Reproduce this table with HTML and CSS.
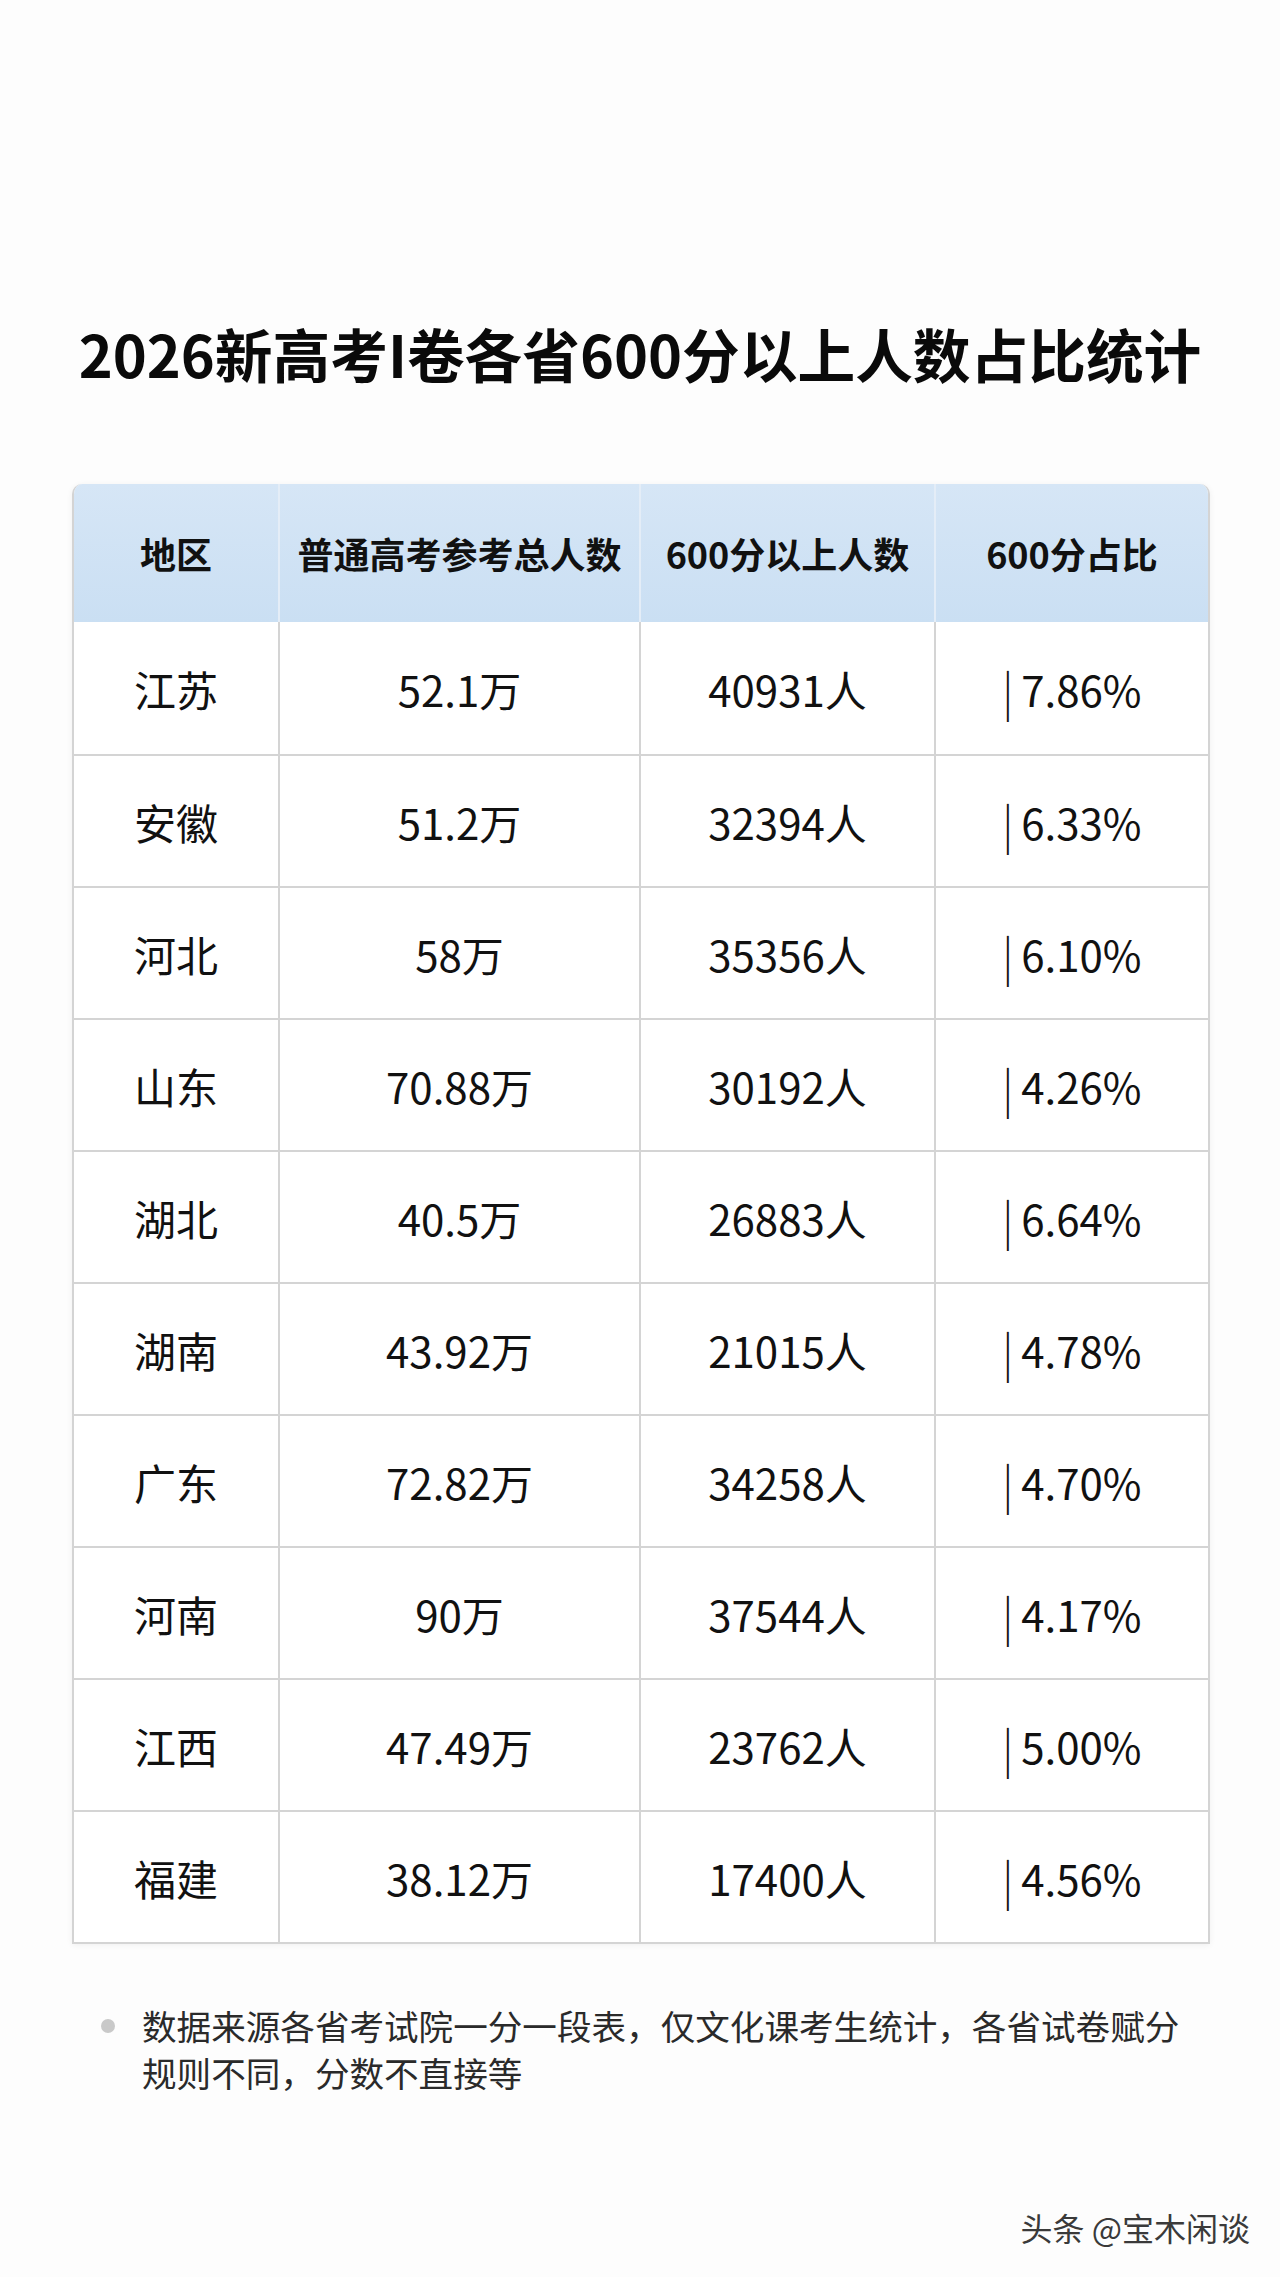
FILE: index.html
```html
<!DOCTYPE html>
<html lang="zh-CN">
<head>
<meta charset="utf-8">
<title>2026新高考I卷各省600分以上人数占比统计</title>
<link rel="stylesheet" href="styles.css">
</head>
<body>
<div class="page">
  <h1 class="title">2026新高考I卷各省600分以上人数占比统计</h1>
  <table class="stats">
    <thead>
      <tr><th>地区</th><th>普通高考参考总人数</th><th>600分以上人数</th><th>600分占比</th></tr>
    </thead>
    <tbody>
      <tr><td>江苏</td><td>52.1万</td><td>40931人</td><td><span class="bar">|</span>7.86%</td></tr>
      <tr><td>安徽</td><td>51.2万</td><td>32394人</td><td><span class="bar">|</span>6.33%</td></tr>
      <tr><td>河北</td><td>58万</td><td>35356人</td><td><span class="bar">|</span>6.10%</td></tr>
      <tr><td>山东</td><td>70.88万</td><td>30192人</td><td><span class="bar">|</span>4.26%</td></tr>
      <tr><td>湖北</td><td>40.5万</td><td>26883人</td><td><span class="bar">|</span>6.64%</td></tr>
      <tr><td>湖南</td><td>43.92万</td><td>21015人</td><td><span class="bar">|</span>4.78%</td></tr>
      <tr><td>广东</td><td>72.82万</td><td>34258人</td><td><span class="bar">|</span>4.70%</td></tr>
      <tr><td>河南</td><td>90万</td><td>37544人</td><td><span class="bar">|</span>4.17%</td></tr>
      <tr><td>江西</td><td>47.49万</td><td>23762人</td><td><span class="bar">|</span>5.00%</td></tr>
      <tr><td>福建</td><td>38.12万</td><td>17400人</td><td><span class="bar">|</span>4.56%</td></tr>
    </tbody>
  </table>
  <div class="note">
    <span class="dot"></span>
    <p class="note-text">数据来源各省考试院一分一段表，仅文化课考生统计，各省试卷赋分规则不同，分数不直接等</p>
  </div>
  <div class="watermark">头条 @宝木闲谈</div>
</div>
</body>
</html>
```
FILE: styles.css
```css
html, body {
  margin: 0;
  padding: 0;
  background: #fdfdfd;
}
body {
  font-family: "Noto Sans CJK SC", "Noto Sans", sans-serif;
  color: #111;
}
.page {
  width: 1280px;
  height: 2277px;
  box-sizing: border-box;
  padding-top: 318px;
  display: flex;
  flex-direction: column;
}
.title {
  margin: 0;
  font-size: 57.7px;
  line-height: 70px;
  font-weight: 700;
  text-align: center;
  color: #0a0a0a;
}
.stats {
  margin: 96px 0 0 72px;
  width: 1138px;
  border-collapse: separate;
  border-spacing: 0;
  table-layout: fixed;
  border: 2px solid #d4d4d4;
  border-top: none;
  border-radius: 10px 10px 0 0;
  overflow: hidden;
  background: #fff;
  box-shadow: 0 1px 6px rgba(0,0,0,0.06);
}
.stats th:nth-child(1), .stats td:nth-child(1) { width: 206px; }
.stats th:nth-child(2), .stats td:nth-child(2) { width: 361px; }
.stats th:nth-child(3), .stats td:nth-child(3) { width: 295px; }
.stats th:nth-child(4), .stats td:nth-child(4) { width: auto; }
.stats th {
  height: 138px;
  padding: 0;
  box-sizing: border-box;
  background: linear-gradient(180deg, #d6e6f6 0%, #cadff3 100%);
  font-size: 36px;
  font-weight: 700;
  text-align: center;
  vertical-align: middle;
  border-right: 2px solid #e4edf7;
  color: #111;
}
.stats th:last-child, .stats td:last-child { border-right: none; }
.stats td {
  height: 132px;
  padding: 0;
  box-sizing: border-box;
  font-size: 42px;
  text-align: center;
  vertical-align: middle;
  border-right: 2px solid #d4d4d4;
  border-top: 2px solid #d4d4d4;
  color: #111;
}
.stats tbody tr:first-child td { border-top: none; }
.bar {
  display: inline-block;
  margin-right: 8px;
  font-weight: 300;
  transform: scaleY(1.1);
}
.note {
  display: flex;
  align-items: flex-start;
  margin: 58px 0 0 101px;
  width: 1120px;
}
.dot {
  flex: none;
  width: 14px;
  height: 14px;
  border-radius: 50%;
  background: #c9c9c9;
  margin-top: 17px;
  margin-right: 27px;
}
.note-text {
  margin: 0;
  font-size: 34.6px;
  line-height: 47px;
  color: #2a2a2a;
  width: 1060px;
}
.watermark {
  margin-top: auto;
  margin-bottom: 30px;
  align-self: flex-end;
  margin-right: 30px;
  font-size: 32px;
  line-height: 40px;
  color: #3a3a3a;
  text-shadow: 1px 1px 0 #fff, -1px 0 0 #fff;
}
```
